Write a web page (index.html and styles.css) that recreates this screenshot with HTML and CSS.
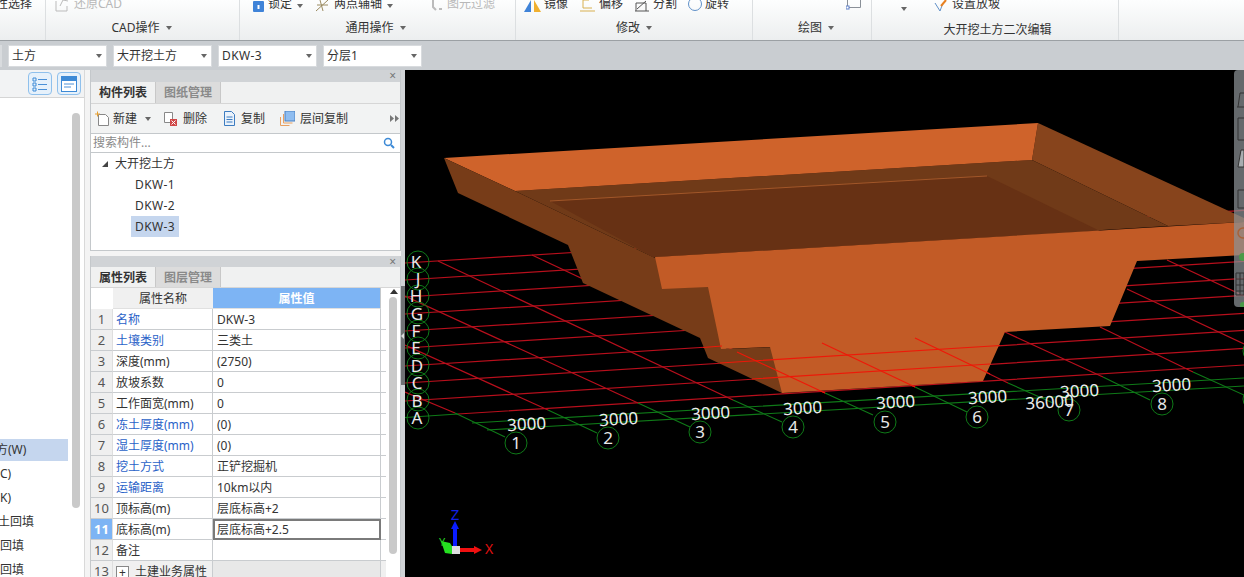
FILE: index.html
```html
<!DOCTYPE html>
<html lang="zh">
<head>
<meta charset="utf-8">
<title>大开挖土方</title>
<link rel="stylesheet" href="styles.css">
</head>
<body>
<header class="ribbon">
  <section class="group g1">
    <div class="tools"><span class="cut">性选择</span></div>
    <div class="glabel"></div>
  </section>
  <section class="group g2">
    <div class="tools">
      <svg class="ico" width="15" height="14" viewBox="0 0 15 14"><path d="M1 3v10h11V8M5 8l3-6 5 1" fill="none" stroke="#bbb"/></svg>
      <span class="off">还原CAD</span>
    </div>
    <div class="glabel">CAD操作<i class="caret"></i></div>
  </section>
  <section class="group g3">
    <div class="tools">
      <svg class="ico i1" width="12" height="14" viewBox="0 0 12 14"><rect x="0" y="3" width="11" height="11" rx="1" fill="#3f83d8"/><rect x="4.500" y="7" width="2" height="4" fill="#fff"/></svg>
      <span>锁定</span><i class="caret c1"></i>
      <svg class="ico i2" width="15" height="14" viewBox="0 0 15 14"><path d="M1 13l12-11M5 2l3 11M2 7h11" fill="none" stroke="#9a8a60"/></svg>
      <span>两点辅轴</span><i class="caret c2"></i>
      <svg class="ico i3" width="10" height="14" viewBox="0 0 10 14"><path d="M1 0v9l3 3M7 11h3" fill="none" stroke="#bbb" stroke-width="2"/></svg>
      <span class="off">图元过滤</span>
    </div>
    <div class="glabel">通用操作<i class="caret"></i></div>
  </section>
  <section class="group g4">
    <div class="tools">
      <svg class="ico" width="17" height="12" viewBox="0 0 17 12"><path d="M0 12L7 0v12z" fill="#3f83d8"/><path d="M10 0l7 12h-7z" fill="#f0b030"/></svg>
      <span>镜像</span>
      <svg class="ico i4" width="17" height="12" viewBox="0 0 17 12"><path d="M1 11h15M4 8h9M4 8V0h6" fill="none" stroke="#d8b050"/></svg>
      <span>偏移</span>
      <svg class="ico i4" width="16" height="12" viewBox="0 0 16 12"><path d="M1 11h14M2 11V3h10v8M3 9l9-8" fill="none" stroke="#555"/></svg>
      <span>分割</span>
      <svg class="ico i4" width="14" height="12" viewBox="0 0 14 12"><circle cx="7" cy="4" r="6.500" fill="none" stroke="#5f90c8"/></svg>
      <span>旋转</span>
    </div>
    <div class="glabel">修改<i class="caret"></i></div>
  </section>
  <section class="group g5">
    <div class="tools">
      <svg class="ico" width="16" height="12" viewBox="0 0 16 12"><path d="M1.500 0v7.500h13V0" fill="none" stroke="#8a9098"/><rect x="0" y="6" width="3" height="3" fill="#fff" stroke="#5f80c8"/></svg>
    </div>
    <div class="glabel">绘图<i class="caret"></i></div>
  </section>
  <section class="group g6">
    <div class="tools">
      <i class="caret c3"></i>
      <svg class="ico i5" width="15" height="12" viewBox="0 0 15 12"><path d="M1 3l5 8 3-8" fill="none" stroke="#5f90c8"/><path d="M7 6l5-6" stroke="#e88020" stroke-width="2"/></svg>
      <span>设置放坡</span>
    </div>
    <div class="glabel low">大开挖土方二次编辑</div>
  </section>
  <section class="group g7"></section>
</header>

<nav class="selectbar">
  <div class="select stub"></div>
  <div class="select"><span>土方</span><i class="caret"></i></div>
  <div class="select"><span>大开挖土方</span><i class="caret"></i></div>
  <div class="select"><span class="wide">DKW-3</span><i class="caret"></i></div>
  <div class="select"><span>分层1</span><i class="caret"></i></div>
</nav>

<main class="workspace">
  <aside class="nav">
    <div class="navhead">
      <button class="viewbtn">
        <svg width="16" height="16" viewBox="0 0 16 16"><path d="M1 2h3v3H1zM1 7h3v3H1zM1 12h3v3H1z" fill="none" stroke="#3d8ad6"/><path d="M6 3.500h9M6 8.500h9M6 13.500h9" stroke="#4a90d8"/></svg>
      </button>
      <button class="viewbtn">
        <svg width="16" height="16" viewBox="0 0 16 16"><rect x="0.500" y="0.500" width="15" height="15" fill="#fff" stroke="#3d8ad6"/><rect x="1" y="1" width="14" height="4" fill="#3d8ad6"/><path d="M3 8h10M3 11h7" stroke="#4a90d8"/></svg>
      </button>
    </div>
    <div class="navbody">
      <ul class="navlist">
        <li class="on"><span class="clip1">方(W)</span></li>
        <li>C)</li>
        <li>K)</li>
        <li><span class="clip2">土回填</span></li>
        <li>回填</li>
        <li>回填</li>
      </ul>
      <div class="navscroll"><div class="navthumb"></div></div>
    </div>
  </aside>

  <div class="dock">
    <section class="panel top">
      <div class="ptitle"><span>×</span></div>
      <div class="tabs"><span class="tab active">构件列表</span><span class="tab">图纸管理</span></div>
      <div class="actions">
        <span class="act a1">
          <svg width="15" height="15" viewBox="0 0 15 15"><path d="M3.500 3.500h7l3 3v8h-10z" fill="#fff" stroke="#888"/><path d="M0 3h5M2.500 .5v5" stroke="#e8a030"/></svg>
          新建<i class="caret"></i>
        </span>
        <span class="act a2">
          <svg width="15" height="15" viewBox="0 0 15 15"><path d="M1.500 1.500h8v10h-8z" fill="#fff" stroke="#888"/><rect x="7" y="8" width="7" height="7" fill="#d04848"/><path d="M8.500 9.500l4 4m0-4l-4 4" stroke="#fff"/></svg>
          删除
        </span>
        <span class="act a3">
          <svg width="13" height="15" viewBox="0 0 13 15"><path d="M1.500 .5h7l3 3v11h-10z" fill="#eaf2fb" stroke="#3d7cc0"/><path d="M3.500 6h6M3.500 8.500h6M3.500 11h6" stroke="#3d7cc0"/></svg>
          复制
        </span>
        <span class="act a4">
          <svg width="15" height="15" viewBox="0 0 15 15"><rect x="5" y="0" width="10" height="10" fill="#8fbdf0" stroke="#4a80c0"/><path d="M3.500 3v9h9M.5 6v8.500h9" fill="none" stroke="#e8a060"/></svg>
          层间复制
        </span>
        <svg class="more" width="9" height="7" viewBox="0 0 9 7"><path d="M0 0l4 3.500L0 7zM5 0l4 3.500L5 7z" fill="#777"/></svg>
      </div>
      <div class="search"><span>搜索构件...</span>
        <svg width="12" height="12" viewBox="0 0 12 12"><circle cx="5" cy="5" r="3.500" fill="none" stroke="#3d8ad6" stroke-width="1.500"/><path d="M8 8l3 3" stroke="#3d8ad6" stroke-width="2"/></svg>
      </div>
      <div class="tree">
        <div class="troot"><i class="twist"></i>大开挖土方</div>
        <div class="tleaf">DKW-1</div>
        <div class="tleaf">DKW-2</div>
        <div class="tleaf sel">DKW-3</div>
      </div>
    </section>

    <section class="panel bottom">
      <div class="ptitle"><span>×</span></div>
      <div class="tabs"><span class="tab active">属性列表</span><span class="tab">图层管理</span></div>
      <div class="grid-wrap">
        <table class="props">
          <colgroup><col class="c-n"><col class="c-k"><col class="c-v"><col class="c-e"></colgroup>
          <thead><tr><th class="blank"></th><th>属性名称</th><th class="hv">属性值</th><th class="blank"></th></tr></thead>
          <tbody>
            <tr><td class="n">1</td><td class="link">名称</td><td>DKW-3</td><td></td></tr>
            <tr><td class="n">2</td><td class="link">土壤类别</td><td>三类土</td><td></td></tr>
            <tr><td class="n">3</td><td>深度(mm)</td><td>(2750)</td><td></td></tr>
            <tr><td class="n">4</td><td>放坡系数</td><td>0</td><td></td></tr>
            <tr><td class="n">5</td><td>工作面宽(mm)</td><td>0</td><td></td></tr>
            <tr><td class="n">6</td><td class="link">冻土厚度(mm)</td><td>(0)</td><td></td></tr>
            <tr><td class="n">7</td><td class="link">湿土厚度(mm)</td><td>(0)</td><td></td></tr>
            <tr><td class="n">8</td><td class="link">挖土方式</td><td>正铲挖掘机</td><td></td></tr>
            <tr><td class="n">9</td><td class="link">运输距离</td><td>10km以内</td><td></td></tr>
            <tr><td class="n">10</td><td>顶标高(m)</td><td>层底标高+2</td><td></td></tr>
            <tr class="cur"><td class="n">11</td><td>底标高(m)</td><td class="edit">层底标高+2.5</td><td></td></tr>
            <tr><td class="n">12</td><td>备注</td><td></td><td></td></tr>
            <tr class="grp"><td class="n">13</td><td><i class="plus">+</i>土建业务属性</td><td></td><td></td></tr>
          </tbody>
        </table>
        <div class="pscroll"><i class="up"></i><div class="pthumb"></div></div>
      </div>
    </section>
  </div>

  <div class="splitter"><div class="splitgrip"><i></i></div></div>

  <div class="viewport">
    <svg class="scene" width="839" height="507" viewBox="405 70 839 507">
      <g class="rows">
        <path d="M405 263L1244 210.400M405 280L1244 227.400M405 297L1244 244.400M405 314L1244 261.400M405 331L1244 278.400M405 348L1244 295.400M405 366L1244 313.400M405 383L1244 330.400M405 401L1244 348.400M458 414L1244 365"/>
        <path d="M405 392L455 413M405 345L548 410M405 296L638 403M438 261L733 400M532 255L825 393M626 249L915 387M720 243L1008 383M1005 332L1103 377M1100 327L1193 372M1127 289L1244 344M1167 260L1244 296"/>
      </g>
      <g class="greens">
        <path d="M405 417.500L458 414M472 423L1244 378M487 430L1244 386"/>
        <path d="M455 413L505 437M548 410L597 433M638 403L690 427M733 400L782 422M825 393L873 415M915 387L967 412M1008 383L1053 403M1103 377L1150 400M1193 372L1244 395"/>
      </g>

      <polygon fill="#87441c" points="1038,123 1244,218 1244,222 1168,226 1032,160"/>
      <polygon fill="#703a18" points="515,191 1032,160 1168,226 653,257"/>
      <polygon fill="#673114" points="550,201 987,176 1100,231 653,257"/>
      <line class="seam" x1="550" y1="201" x2="987" y2="176"/>
      <polygon fill="#cf632b" points="444,158 1038,123 1032,160 515,191"/>
      <polygon fill="#773c18" points="444,158 515,191 653,257 670,262 670,288 712,286 726,349 775,347 784,393 782,393 708,358 700,338 583,283 568,245 458,193"/>
      <polygon fill="#c25b26" points="655,257 1244,222 1244,255 1137,261 1110,326 1005,332 983,381 782,393 770,347 721,349 708,287 662,289"/>

      <g class="over">
        <path d="M703 347.500L722 346M720 363L1000 345.500M752 379L990 364"/>
        <path d="M737 352L825 393M822 343L915 387M915 338L990 374"/>
      </g>

      <g class="bubbles">
        <circle cx="418" cy="262" r="11"/><circle cx="418" cy="279" r="11"/><circle cx="418" cy="296" r="11"/><circle cx="418" cy="313" r="11"/><circle cx="418" cy="331" r="11"/><circle cx="418" cy="348" r="11"/><circle cx="418" cy="365" r="11"/><circle cx="418" cy="383" r="11"/><circle cx="418" cy="400" r="11"/><circle cx="418" cy="418" r="11"/>
        <circle cx="516" cy="443" r="11"/><circle cx="608" cy="438" r="11"/><circle cx="700" cy="432" r="11"/><circle cx="793" cy="427" r="11"/><circle cx="885" cy="422" r="11"/><circle cx="977" cy="417" r="11"/><circle cx="1069" cy="410" r="11"/><circle cx="1162" cy="404" r="11"/><circle cx="1254" cy="399" r="11"/><circle cx="1254" cy="351" r="11"/>
      </g>
      <g class="labels">
        <text x="416" y="268">K</text><text x="418" y="285">J</text><text x="416" y="302">H</text><text x="417" y="320">G</text><text x="416" y="337">F</text><text x="416" y="354">E</text><text x="417" y="372">D</text><text x="417" y="389">C</text><text x="417" y="407">B</text><text x="417" y="424">A</text>
        <text x="516" y="449">1</text><text x="608" y="444">2</text><text x="700" y="438">3</text><text x="793" y="433">4</text><text x="885" y="428">5</text><text x="977" y="423">6</text><text x="1069" y="416">7</text><text x="1162" y="410">8</text>
      </g>
      <g class="dims">
        <text transform="translate(527 430) rotate(-3.500)">3000</text>
        <text transform="translate(619 425) rotate(-3.500)">3000</text>
        <text transform="translate(711 419) rotate(-3.500)">3000</text>
        <text transform="translate(803 414) rotate(-3.500)">3000</text>
        <text transform="translate(896 408) rotate(-3.500)">3000</text>
        <text transform="translate(988 403) rotate(-3.500)">3000</text>
        <text transform="translate(1050 408) rotate(-3.500)">36000</text>
        <text transform="translate(1080 397) rotate(-3.500)">3000</text>
        <text transform="translate(1172 391) rotate(-3.500)">3000</text>
      </g>

      <g class="triad">
        <path d="M455 546V527" stroke="#0a1cff" stroke-width="4"/>
        <path d="M455 521l-4 8h8z" fill="#0a1cff"/>
        <path d="M441 541l9 2 3 5-1 6-7-1z" fill="#25e020"/>
        <path d="M460 550h16" stroke="#f01010" stroke-width="4"/>
        <path d="M482 550l-8-4v8z" fill="#f01010"/>
        <rect x="452" y="546" width="8" height="8" fill="#ddd"/>
        <text class="tz" x="455" y="520">Z</text>
        <text class="tx" x="489" y="554">X</text>
        <text class="ty" x="442" y="546">Y</text>
      </g>
    </svg>

    <div class="floatbar">
      <svg width="10" height="232" viewBox="0 0 10 232">
        <path d="M4 32l2-14h4M3 32h7" fill="none" stroke="#333"/>
        <path d="M4 65V43h6M4 65h6" fill="none" stroke="#333"/>
        <path d="M4 92l3-17h3v17z" fill="#a8adb0" stroke="#333"/>
        <path d="M4 133v-18h6M4 133h6" fill="none" stroke="#333"/>
        <circle cx="9" cy="158" r="5" fill="none" stroke="#a8623a" stroke-width="1.500"/>
        <circle cx="9" cy="182" r="4" fill="#4a9a48"/>
        <path d="M2 198h8v22H2zM2 204h8M2 210h8M2 216h8M6 198v22" fill="none" stroke="#333"/>
        <circle cx="9" cy="230" r="3" fill="#4a9a48"/>
      </svg>
    </div>
  </div>
</main>
</body>
</html>
```
FILE: styles.css
```css
* { box-sizing: border-box; }
html, body { margin: 0; padding: 0; }
body {
  width: 1244px;
  height: 577px;
  overflow: hidden;
  display: flex;
  flex-direction: column;
  background: #c9cdd1;
  color: #333;
  font: 12px/16px "Noto Sans", "Noto Sans CJK SC", sans-serif;
}
ul { list-style: none; margin: 0; padding: 0; }
i { font-style: normal; }

.caret {
  display: inline-block;
  width: 0;
  height: 0;
  border: 3px solid transparent;
  border-top: 4px solid #666;
  border-bottom: 0;
}

/* ribbon */
.ribbon {
  flex: none;
  height: 41px;
  display: flex;
  background: linear-gradient(#fdfefe, #eceeef);
  border-bottom: 1px solid #9ba0a4;
  overflow: hidden;
}
.group {
  flex: none;
  display: flex;
  flex-direction: column;
  border-right: 1px solid #dcdfe1;
  height: 40px;
}
.g1 { width: 46px; }
.g2 { width: 194px; }
.g3 { width: 276px; }
.g4 { width: 237px; }
.g5 { width: 119px; }
.g6 { width: 247px; }
.g7 { flex: 1; border-right: 0; }
.tools {
  height: 12px;
  display: flex;
  align-items: flex-end;
  white-space: nowrap;
  overflow: hidden;
}
.tools > span { line-height: 16px; height: 16px; flex: none; }
.tools .off { color: #b8b8b8; }
.cut { margin-left: -4px; }
.ico { flex: none; margin-right: 4px; }
.g2 .tools { padding-left: 9px; }
.g3 .tools { padding-left: 13px; }
.g3 .i1 { margin-right: 3px; }
.g3 .c1 { margin: 0 0 4px 5px; }
.g3 .i2 { margin-left: 12px; }
.g3 .c2 { margin: 0 0 4px 5px; }
.g3 .i3 { margin-left: 39px; margin-right: 5px; }
.g4 .tools { padding-left: 8px; }
.g4 .ico { margin-right: 3px; }
.g4 .i4 { margin-left: 11px; }
.g5 .tools { padding-left: 93px; }
.c3 { margin: 0 27px 1px 29px; }
.g6 .i5 { margin-right: 3px; }
.glabel {
  margin-top: 8px;
  text-align: center;
  line-height: 16px;
  height: 16px;
  white-space: nowrap;
}
.glabel .caret { margin-left: 6px; vertical-align: 2px; }
.g2 .glabel { padding-right: 2px; }
.g3 .glabel { padding-right: 4px; }
.g5 .glabel { padding-left: 8px; }
.g6 .glabel { padding-left: 5px; }
.glabel.low { margin-top: 10px; }

/* select bar */
.selectbar {
  flex: none;
  height: 29px;
  display: flex;
  gap: 6px;
  padding: 4px 0 3px;
}
.select {
  width: 99px;
  background: #fff;
  border: 1px solid #d8dbde;
  display: flex;
  align-items: center;
  justify-content: space-between;
  padding: 0 4px 0 3px;
}
.select.stub { width: 2px; padding: 0; }
.wide { letter-spacing: 0.4px; }

/* workspace */
.workspace {
  flex: 1;
  min-height: 0;
  display: flex;
  overflow: hidden;
}
.nav {
  flex: none;
  width: 85px;
  background: #fff;
  border-right: 1px solid #d9d9d9;
  display: flex;
  flex-direction: column;
}
.navhead {
  flex: none;
  height: 28px;
  display: flex;
  gap: 5px;
  padding: 2px 0 0 28px;
  background: #f2f3f4;
  border-bottom: 1px solid #d5d5d5;
}
.viewbtn {
  width: 24px;
  height: 23px;
  padding: 0;
  display: flex;
  align-items: center;
  justify-content: center;
  background: #e6f1fb;
  border: 1px solid #8fc0ec;
  border-radius: 4px;
}
.navbody { flex: 1; display: flex; min-height: 0; }
.navlist { width: 72px; padding-top: 341px; overflow: hidden; }
.navlist li { height: 24px; line-height: 22px; width: 68px; overflow: hidden; white-space: nowrap; color: #333; }
.navlist li.on { background: #c5d6ee; height: 22px; margin-bottom: 2px; }
.clip1 { display: block; margin-left: -4px; }
.clip2 { display: block; margin-left: -2px; }
.navscroll { width: 8px; padding-top: 15px; }
.navthumb { height: 395px; background: #c9c9c9; border-radius: 4px; }

.dock {
  flex: none;
  width: 316px;
  padding-left: 5px;
  background: #f4f4f4;
  display: flex;
  flex-direction: column;
  gap: 5px;
}
.panel {
  width: 311px;
  border: 1px solid #c4c8cb;
  border-top: 0;
  background: #fff;
  display: flex;
  flex-direction: column;
}
.panel.top { height: 181px; flex: none; }
.panel.bottom { flex: 1; min-height: 0; overflow: hidden; border-bottom: 0; }
.ptitle {
  flex: none;
  height: 12px;
  background: #d0d3d6;
  text-align: right;
  padding-right: 4px;
  font-size: 12px;
  line-height: 11px;
  color: #777;
}
.bottom .ptitle { height: 11px; }
.tabs {
  flex: none;
  height: 22px;
  display: flex;
  background: #f0f1f1;
  border-bottom: 1px solid #d6d6d6;
}
.bottom .tabs { height: 21px; }
.tab {
  width: 65px;
  text-align: center;
  line-height: 21px;
  color: #8a8a8a;
  font-weight: 700;
  background: #dcdcdc;
  border-right: 1px solid #c8c8c8;
}
.tab.active { background: #f0f1f1; color: #333; }
.actions {
  flex: none;
  height: 30px;
  display: flex;
  align-items: center;
  background: #f2f3f3;
  border-bottom: 1px solid #c4c8cb;
  white-space: nowrap;
}
.act { display: flex; align-items: center; gap: 5px; flex: none; }
.act .caret { margin-left: 5px; }
.a1 { margin-left: 4px; gap: 3px; }
.a2 { margin-left: 12px; }
.a3 { margin-left: 16px; }
.a4 { margin-left: 15px; }
.more { margin-left: auto; margin-right: 1px; flex: none; }
.search {
  flex: none;
  height: 19px;
  display: flex;
  align-items: center;
  justify-content: space-between;
  padding: 0 5px 0 2px;
  color: #8a8a8a;
  border-bottom: 1px solid #c4c8cb;
}
.tree { flex: 1; }
.troot { height: 21px; line-height: 21px; padding-left: 24px; position: relative; }
.twist {
  position: absolute;
  left: 11px;
  top: 8px;
  width: 0;
  height: 0;
  border-left: 6px solid transparent;
  border-bottom: 6px solid #444;
}
.tleaf { height: 21px; line-height: 21px; margin-left: 40px; width: 48px; padding-left: 4px; letter-spacing: 0.4px; }
.tleaf.sel { background: #c5d6ee; }

.grid-wrap { flex: 1; min-height: 0; display: flex; overflow: hidden; }
.props {
  width: 295px;
  height: 294px;
  flex: none;
  table-layout: fixed;
  border-collapse: separate;
  border-spacing: 0;
}
.c-n { width: 22px; }
.c-k { width: 100px; }
.c-v { width: 168px; }
.c-e { width: 5px; }
.props th {
  height: 21px;
  padding: 1px 0 0;
  font-weight: 400;
  background: #f0f0f0;
  border-bottom: 1px solid #e0e0e0;
}
.props th.blank { background: #fff; border: 0; }
.props th.hv { background: #7db4f4; color: #fff; font-weight: 700; border-right: 1px solid #c4c8cb; }
.props td {
  height: 21px;
  padding: 1px 0 0 3px;
  line-height: 19px;
  border-bottom: 1px solid #c9cccf;
  white-space: nowrap;
  overflow: hidden;
}
.props td:nth-child(2) { border-right: 1px solid #c9cccf; }
.props td:nth-child(3) { border-right: 1px solid #c9cccf; padding-left: 4px; }
.props td.n {
  padding: 1px 0 0;
  text-align: center;
  background: #efefef;
  color: #555;
  border-right: 1px solid #dedede;
  font-size: 13px;
}
.props td.link { color: #2a62c8; }
.props .cur td.n { background: #7db4f4; color: #fff; font-weight: 700; }
.props td.edit { border: 2px solid #7a7a7a; padding: 0 0 0 2px; line-height: 17px; }
.props .grp td { background: #f0f0f0; line-height: 17px; }
.props .grp td:nth-child(3) { background: #e8e8e8; }
.plus {
  display: inline-block;
  width: 13px;
  height: 13px;
  line-height: 11px;
  text-align: center;
  border: 1px solid #888;
  background: #fff;
  margin: 0 6px 0 0;
  vertical-align: -1px;
}
.pscroll { flex: 1; padding: 1px 0 0 3px; }
.up {
  display: block;
  width: 0;
  height: 0;
  margin-left: 1px;
  border: 4px solid transparent;
  border-top: 0;
  border-bottom: 5px solid #333;
}
.pthumb { width: 8px; height: 257px; margin-top: 3px; background: #c9c9c9; border-radius: 4px; }

.splitter { flex: none; width: 4px; background: #d0d3d6; padding-top: 216px; }
.splitgrip { height: 99px; background: #6f7274; display: flex; align-items: center; }
.splitgrip i {
  display: block;
  width: 0;
  height: 0;
  border: 3px solid transparent;
  border-left: 0;
  border-right: 3px solid #ddd;
}

/* 3D canvas */
.viewport { flex: 1; position: relative; background: #000; overflow: hidden; }
.scene { display: block; }
.rows path { fill: none; stroke: #b80f1c; stroke-width: 1.200; }
.greens path { fill: none; stroke: #0f7a18; stroke-width: 1.100; }
.over path { fill: none; stroke: #ee1808; stroke-width: 1.200; }
.seam { stroke: #b0602f; stroke-width: 0.800; }
.bubbles circle { fill: none; stroke: #0f7a18; stroke-width: 1; }
.labels text {
  fill: #e8e8e8;
  font-family: "Noto Sans", sans-serif;
  font-size: 17px;
  text-anchor: middle;
}
.dims text {
  fill: #ececec;
  font-family: "Noto Sans", sans-serif;
  font-size: 17px;
  text-anchor: middle;
}
.triad text { font-family: "Noto Sans", sans-serif; font-size: 14px; text-anchor: middle; }
.triad .tz { fill: #1020e8; font-size: 15px; }
.triad .tx { fill: #e01010; }
.triad .ty { fill: #25d020; font-size: 11px; }
.floatbar {
  position: absolute;
  right: 0;
  top: 0;
  width: 10px;
  height: 237px;
  padding-top: 5px;
  background: rgba(140, 146, 150, 0.72);
  border-radius: 4px 0 0 4px;
}
.floatbar svg { display: block; }
```
